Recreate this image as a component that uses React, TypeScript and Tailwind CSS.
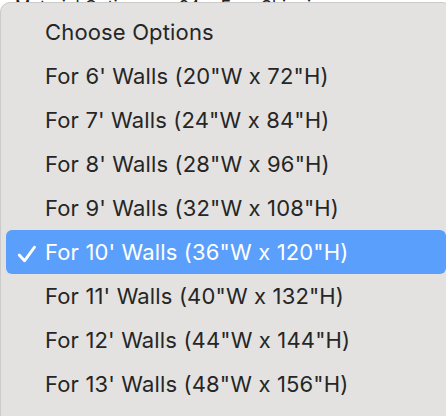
import React from "react";

const items = [
  "Choose Options",
  "For 6' Walls (20\"W x 72\"H)",
  "For 7' Walls (24\"W x 84\"H)",
  "For 8' Walls (28\"W x 96\"H)",
  "For 9' Walls (32\"W x 108\"H)",
  "For 10' Walls (36\"W x 120\"H)",
  "For 11' Walls (40\"W x 132\"H)",
  "For 12' Walls (44\"W x 144\"H)",
  "For 13' Walls (48\"W x 156\"H)",
];

export default function App() {
  return (
    <div
      className="relative w-[446px] h-[416px] overflow-hidden bg-white"
      style={{ fontFamily: "Inter, 'Noto Sans', sans-serif" }}
    >
      <div className="h-[3px] overflow-hidden">
        <div className="flex items-end h-[3px] text-[17px] leading-none text-[#222] pl-[15px]">
          <span className="mb-[-13px] whitespace-nowrap">Material Options</span>
          <span className="mb-[-13px] ml-[32px] whitespace-nowrap">24</span>
          <span className="mb-[-13px] ml-[21px] whitespace-nowrap">Free Shipping</span>
        </div>
      </div>
      <div className="absolute left-0 top-[2px] w-[452px] h-[430px] rounded-[10px] border border-[#cbcbcb] bg-[#e3e2e1] pt-[7px] px-[5px]">
        {items.map((t, i) => {
          const sel = i === 5;
          return (
            <div
              key={i}
              className={
                sel
                  ? "relative flex items-center h-[44px] pl-[39px] rounded-[6px] bg-[#5a9ffc] text-white text-[22px] tracking-[0.15px]"
                  : "relative flex items-center h-[44px] pl-[39px] text-[#262626] text-[22px] tracking-[0.15px]"
              }
            >
              {sel && (
                <svg
                  className="absolute left-[11px] top-[15px]"
                  width="20"
                  height="18"
                  viewBox="0 0 20 18"
                  fill="none"
                >
                  <path
                    d="M2.2 10 L7.5 15.8 L17.5 2.2"
                    stroke="white"
                    strokeWidth="2.8"
                    strokeLinecap="round"
                    strokeLinejoin="round"
                  />
                </svg>
              )}
              <span className="whitespace-nowrap">{t}</span>
            </div>
          );
        })}
      </div>
    </div>
  );
}
